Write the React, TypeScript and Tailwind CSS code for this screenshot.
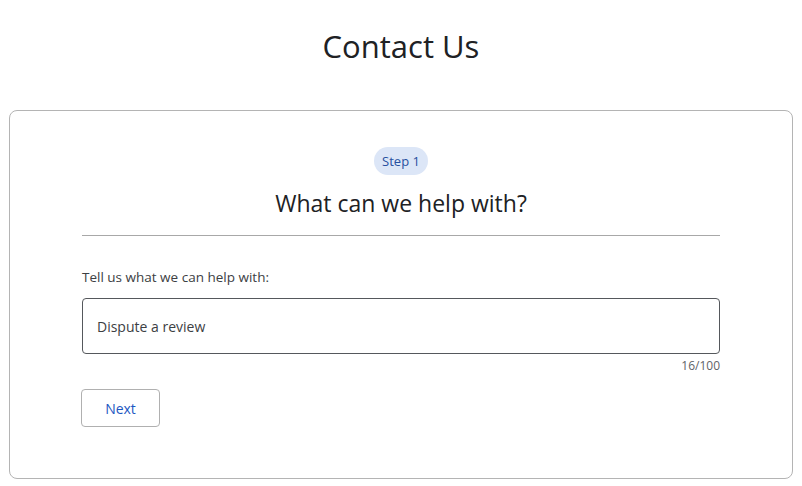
export default function App() {
  return (
    <div className="min-h-[486px] bg-white px-[9px] pt-[28px] text-[#202124] [font-family:'Open_Sans',Roboto,sans-serif]">
      <h1 className="text-center text-[31px] leading-[36px] font-normal">Contact Us</h1>

      <section className="mt-[46px] rounded-lg border border-[#b4b4b4] px-[72px] pt-[36px] pb-[51px]">
        <div className="flex flex-col items-center">
          <span className="rounded-full bg-[#dce6f7] px-[8px] py-[5px] text-[13px] leading-[18px] text-[#2750a0]">
            Step 1
          </span>
          <h2 className="mt-[13px] text-[23px] leading-[30px] font-normal">What can we help with?</h2>
        </div>
        <hr className="mt-[17px] border-[#a8a8a8]" />

        <label className="mt-[31px] block text-[13.5px] leading-[20px] text-[#3c4043]">
          Tell us what we can help with:
        </label>
        <div className="mt-[11px] flex h-[56px] items-center rounded border border-[#55585c] px-[14px] text-[14px] text-[#3c4043]">
          Dispute a review
        </div>
        <div className="mt-[4px] text-right text-[12px] leading-[16px] text-[#5f6368]">16/100</div>

        <button className="-ml-px mt-[15px] h-[38px] w-[79px] rounded border border-[#b0b0b0] text-[14px] font-medium text-[#1d57c2]">
          Next
        </button>
      </section>
    </div>
  );
}
